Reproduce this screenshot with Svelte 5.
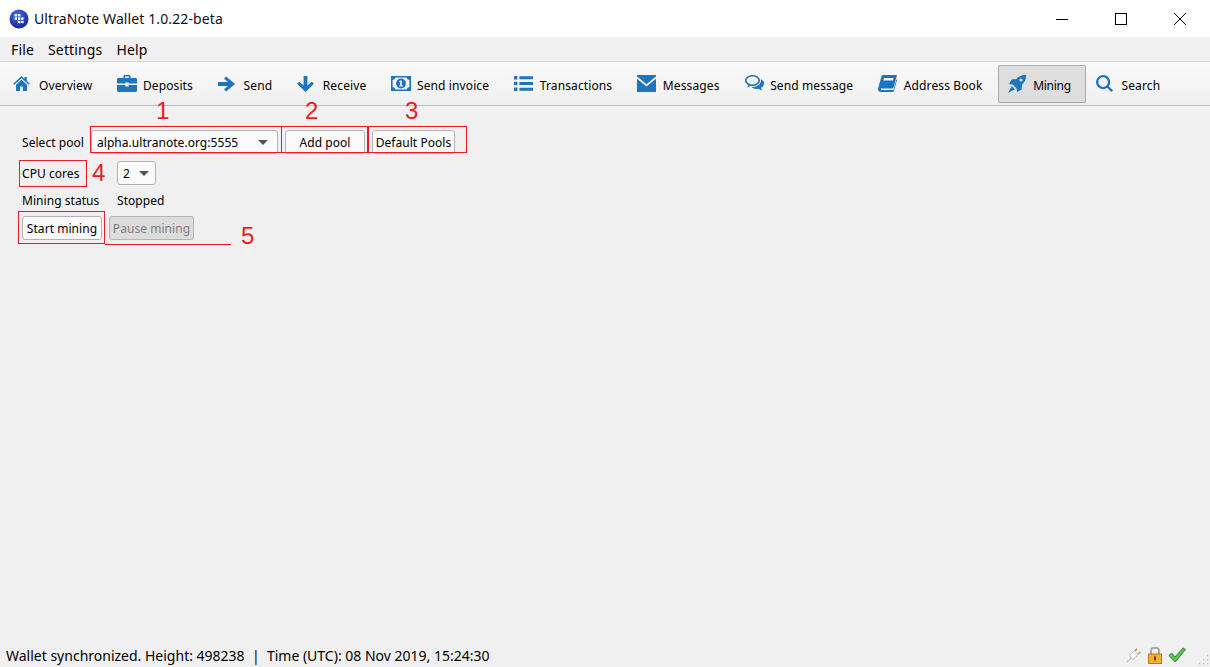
<script>
	const menus = ['File', 'Settings', 'Help'];

	const tools = [
		{ label: 'Overview', w: 17, h: 15, vb: '0 0 20 18', d: 'M10 0 13.6 3.3V1.2H16.4V5.9L20 9.2 18.8 10.6 10 2.7 1.2 10.6 0 9.2ZM3.4 10.4 10 4.4 16.6 10.4V18H11.8V12.6H8.2V18H3.4Z' },
		{ label: 'Deposits', w: 20, h: 17, vb: '0 0 20 17', d: 'M6.5 3V1.2Q6.5 0 7.7 0H12.3Q13.5 0 13.5 1.2V3H18.6Q20 3 20 4.4V8.6H11.6V7.6H8.4V8.6H0V4.4Q0 3 1.4 3ZM8 3H12V1.6H8ZM0 10H8.4V11.4H11.6V10H20V15.6Q20 17 18.6 17H1.4Q0 17 0 15.6Z' },
		{ label: 'Send', w: 17, h: 16, vb: '0 0 18 16', d: 'M8.6 0 18 8 8.6 16 6.4 13.6 10.6 10H0V6H10.6L6.4 2.4Z' },
		{ label: 'Receive', w: 17, h: 16, vb: '0 0 18 17', d: 'M7 0H11V10.2L15.6 6 18 8.3 9 17 0 8.3 2.4 6 7 10.2Z' },
		{ label: 'Send invoice', w: 20, h: 15, vb: '0 0 20 15', d: 'M0 0H20V15H0ZM1.6 4V11A3 3 0 0 1 4.4 13.4H15.6A3 3 0 0 1 18.4 11V4A3 3 0 0 1 15.6 1.6H4.4A3 3 0 0 1 1.6 4ZM10 2.6A4.9 4.9 0 1 1 10 12.4 4.9 4.9 0 1 1 10 2.6ZM8.2 5V6.2H9.2V9.4H8.2V10.6H11.8V9.4H10.8V4.6H9.6Z' },
		{ label: 'Transactions', w: 19, h: 15, vb: '0 0 19 15', d: 'M0 0H3.4V3.4H0ZM5.4 .2H19V3.2H5.4ZM0 5.8H3.4V9.2H0ZM5.4 6H19V9H5.4ZM0 11.6H3.4V15H0ZM5.4 11.8H19V14.8H5.4Z' },
		{ label: 'Messages', w: 19, h: 17, vb: '0 0 19 17', d: 'M0 0H19V1.6L9.5 9.2 0 1.6ZM0 3.8 9.5 11.4 19 3.8V17H0Z' },
		{ label: 'Send message', w: 19, h: 17, vb: '0 0 19 17', d: 'M7.5 0C11.6 0 15 2.4 15 5.5S11.6 11 7.5 11C6.8 11 6.2 10.9 5.6 10.8 4.6 11.6 3.4 12.2 2 12.4 2.6 11.6 3 10.8 3.2 9.9 1.2 8.9 0 7.3 0 5.5 0 2.4 3.4 0 7.5 0ZM7.5 1.6C4.3 1.6 1.7 3.3 1.7 5.5 1.7 7 3 8.3 4.9 9 5.7 9.3 6.6 9.4 7.5 9.4 10.7 9.4 13.3 7.7 13.3 5.5S10.7 1.6 7.5 1.6ZM16 4.2C17.8 5.2 19 6.7 19 8.5 19 10.3 17.8 11.9 16 12.7 16.2 13.7 16.6 14.6 17.2 15.4 15.8 15.2 14.6 14.6 13.6 13.8 13 13.9 12.4 14 11.8 14 9.6 14 7.7 13.2 6.5 12 11.4 12.4 16.6 9.4 16 4.2Z' },
		{ label: 'Address Book', w: 19, h: 17, vb: '0 0 19 17', d: 'M5 0H19L15.6 12.4Q15.2 13.4 14 13.4H3.6Q2.6 13.4 2.8 14.4 3 15 4 15H15.4L18.4 4.2 19 5 15.8 16Q15.5 17 14.4 17H3Q.4 17 0 14.4 0 13.6.3 12.8L3.4 1.4Q3.8 0 5 0ZM6 3 5.4 5.4H15L15.6 3Z' },
		{ label: 'Mining', active: true, w: 18, h: 18, vb: '0 0 18 18', d: 'M18 0C18.2 3.8 17 7 14 9.8L13.6 14.4 9 17 8.6 13.4 4.8 9.6 1 9.2 3.6 4.4 8.2 4C11 1.2 14.2-.2 18 0ZM13 3.4A1.6 1.6 0 1 0 13 6.6 1.6 1.6 0 1 0 13 3.4ZM3.8 11.2 6.8 14.2 4.6 15.6 0 18 2.4 13.4Z' },
		{ label: 'Search', w: 17, h: 17, vb: '0 0 18 18', d: 'M7.5 0A7.5 7.5 0 0 1 13.5 12L18 16.2 16.2 18 11.9 13.6A7.5 7.5 0 1 1 7.5 0ZM7.5 2.4A5.1 5.1 0 1 0 7.5 12.6 5.1 5.1 0 1 0 7.5 2.4Z' }
	];

	// logo dots, as [column, row]
	const dots = [[0, 0], [1, 0], [0, 1], [1, 1], [2, 1], [1, 2], [2, 2]];

	// hand-drawn review marks that sit on top of the screenshot
	const boxes = [
		{ x: 90, y: 126, w: 192, h: 27 },
		{ x: 281, y: 126, w: 87, h: 27 },
		{ x: 368, y: 126, w: 99, h: 27 },
		{ x: 19, y: 160, w: 68, h: 27 },
		{ x: 18, y: 211, w: 87, h: 33 },
		{ x: 105, y: 244, w: 126, h: 1 }
	];

	const marks = [
		{ n: 1, x: 156, y: 97 },
		{ n: 2, x: 305, y: 97 },
		{ n: 3, x: 405, y: 97 },
		{ n: 4, x: 92, y: 159 },
		{ n: 5, x: 241, y: 222 }
	];
</script>

<div class="window">
	<header class="titlebar">
		<svg class="logo" width="20" height="20" viewBox="0 0 20 20">
			<defs>
				<radialGradient id="orb" cx="40%" cy="30%" r="75%">
					<stop offset="0" stop-color="#4a6fe0" />
					<stop offset="1" stop-color="#14209a" />
				</radialGradient>
			</defs>
			<circle cx="10" cy="10" r="9.5" fill="url(#orb)" />
			{#each dots as [c, r]}
				<rect x={5.6 + c * 3.3} y={5 + r * 3.4} width="2.4" height="2.4" fill="#fff" />
			{/each}
		</svg>
		<span class="title">UltraNote Wallet 1.0.22-beta</span>
		<div class="winctl">
			<svg width="12" height="12" viewBox="0 0 12 12"><path d="M0 6.5H12" stroke="#000" fill="none" /></svg>
			<svg width="12" height="12" viewBox="0 0 12 12"><rect x=".5" y=".5" width="11" height="11" stroke="#000" fill="none" /></svg>
			<svg width="12" height="12" viewBox="0 0 12 12"><path d="M0 0 12 12M12 0 0 12" stroke="#000" fill="none" /></svg>
		</div>
	</header>

	<nav class="menubar">
		{#each menus as m}
			<span>{m}</span>
		{/each}
	</nav>

	<div class="toolbar">
		{#each tools as t}
			<div class="tool" class:active={t.active}>
				<span class="tool-icon">
					<svg width={t.w} height={t.h} viewBox={t.vb}><path fill="#1f74bf" fill-rule="evenodd" d={t.d} /></svg>
				</span>
				<span class="tool-label">{t.label}</span>
			</div>
		{/each}
	</div>

	<main class="content">
		<div class="row">
			<span class="label first">Select pool</span>
			<div class="btn combo pool">alpha.ultranote.org:5555<i class="caret"></i></div>
			<div class="btn add">Add pool</div>
			<div class="btn defaults">Default Pools</div>
		</div>
		<div class="row">
			<span class="label second">CPU cores</span>
			<div class="btn combo cores">2<i class="caret"></i></div>
		</div>
		<div class="row status-row">
			<span class="label second">Mining status</span>
			<span class="label">Stopped</span>
		</div>
		<div class="row">
			<div class="btn start">Start mining</div>
			<div class="btn pause">Pause mining</div>
		</div>
	</main>

	<footer class="statusbar">
		<span class="status-text">Wallet synchronized. Height: 498238&nbsp; |&nbsp; Time (UTC): 08 Nov 2019, 15:24:30</span>
		<div class="status-icons">
			<svg width="16" height="16" viewBox="0 0 16 16">
				<path d="M1 15 5 11" stroke="#c9c9c9" stroke-width="1.5" />
				<path d="M3.5 8 8.5 4 12 7.5 7.5 12.5Q5 12.5 3.5 8Z" fill="#f6f6f6" stroke="#bdbdbd" />
				<path d="M9 4 11 1.5M12 7 14.5 5" stroke="#b59a52" stroke-width="1.5" />
			</svg>
			<svg width="16" height="18" viewBox="0 0 16 18">
				<path d="M4 8V4.5C4 .8 12 .8 12 4.5V8" fill="none" stroke="#a8a8a8" stroke-width="2" />
				<rect x="1.5" y="8" width="13" height="9.5" fill="#f3b12b" stroke="#b97f17" />
				<rect x="7" y="10.5" width="2" height="4" fill="#6b3d05" />
			</svg>
			<svg width="18" height="16" viewBox="0 0 18 16">
				<path d="M1 8.5 3.8 6 7 10 15 1 17.5 2.5 7.2 15Z" fill="#5fc04a" stroke="#2f8a3a" />
			</svg>
		</div>
		<svg class="grip" width="10" height="10" viewBox="0 0 10 10" fill="#c4c4c4">
			<rect x="8" y="0" width="1.4" height="1.4" />
			<rect x="4" y="4" width="1.4" height="1.4" /><rect x="8" y="4" width="1.4" height="1.4" />
			<rect x="0" y="8" width="1.4" height="1.4" /><rect x="4" y="8" width="1.4" height="1.4" /><rect x="8" y="8" width="1.4" height="1.4" />
		</svg>
	</footer>

	{#each boxes as b}
		<div class="redbox" class:line={b.h === 1} style="left:{b.x}px;top:{b.y}px;width:{b.w}px;height:{b.h}px"></div>
	{/each}
	{#each marks as m}
		<span class="mark" style="left:{m.x}px;top:{m.y}px">{m.n}</span>
	{/each}
</div>

<style>
	:global(body) {
		margin: 0;
		background: #f0f0f0;
	}

	.window {
		position: relative;
		display: flex;
		flex-direction: column;
		height: 667px;
		overflow: hidden;
		background: #f0f0f0;
		color: #000;
		font-family: "Noto Sans", sans-serif;
	}

	.titlebar {
		display: flex;
		align-items: center;
		height: 37px;
		flex: none;
		background: #fff;
		padding-left: 9px;
	}

	.logo {
		margin-right: 5px;
	}

	.title {
		font-size: 14px;
		letter-spacing: .11px;
		color: #111;
	}

	.winctl {
		margin-left: auto;
		display: flex;
		gap: 47px;
		padding-right: 24px;
	}

	.menubar {
		display: flex;
		align-items: center;
		gap: 14px;
		height: 24px;
		flex: none;
		padding-left: 11px;
		font-size: 14px;
		letter-spacing: .15px;
		border-bottom: 1px solid #d9d9d9;
	}

	.toolbar {
		display: flex;
		align-items: center;
		height: 43px;
		flex: none;
		padding-left: 3.4px;
		background: linear-gradient(#f9f9f9, #f0f0f0);
		border-bottom: 1px solid #bdbdbd;
		font-size: 12px;
		letter-spacing: .12px;
	}

	.tool {
		display: flex;
		align-items: center;
		gap: 5.6px;
		height: 38px;
		padding: 0 14px 0 9px;
		border: 1px solid transparent;
		border-radius: 2px;
		box-sizing: border-box;
		white-space: nowrap;
	}

	.tool-label {
		position: relative;
		top: 2px;
	}

	.tool.active {
		background: #dedede;
		border-color: #a9a9a9;
		letter-spacing: -.25px;
	}

	.tool-icon {
		display: flex;
		width: 20px;
	}

	.content {
		flex: 1;
		padding: 24px 0 0 22px;
		font-size: 12px;
		letter-spacing: .05px;
	}

	.row {
		display: flex;
		align-items: center;
		gap: 7px;
		min-height: 24px;
		margin-bottom: 7px;
		white-space: nowrap;
	}

	.status-row {
		min-height: 16px;
	}

	.label.first {
		width: 62px;
	}

	.label.second {
		width: 88px;
	}

	.btn {
		display: flex;
		align-items: center;
		justify-content: center;
		height: 24px;
		flex: none;
		box-sizing: border-box;
		background: #fafafa;
		border: 1px solid #b4b4b4;
		border-radius: 3px;
	}

	.combo {
		justify-content: flex-start;
		padding-left: 5px;
	}

	.pool {
		width: 187px;
	}

	.add {
		width: 80px;
	}

	.defaults {
		width: 83px;
	}

	.cores {
		width: 39px;
	}

	.start {
		width: 80px;
	}

	.pause {
		width: 85px;
		background: #dcdcdc;
		color: #808080;
	}

	.caret {
		margin-left: auto;
		margin-right: 9px;
		width: 0;
		height: 0;
		border-left: 5px solid transparent;
		border-right: 5px solid transparent;
		border-top: 5px solid #555;
	}

	.cores .caret {
		margin-right: 6px;
	}

	.statusbar {
		display: flex;
		align-items: center;
		height: 24px;
		flex: none;
		padding-left: 6px;
		font-size: 14px;
	}

	.status-icons {
		margin-left: auto;
		margin-right: 24px;
		display: flex;
		align-items: center;
		gap: 5px;
	}

	.grip {
		position: absolute;
		right: 1px;
		bottom: 2px;
	}

	.redbox {
		position: absolute;
		box-sizing: border-box;
		border: 1px solid #ed1c24;
	}

	.redbox.line {
		border-width: 1px 0 0;
	}

	.mark {
		position: absolute;
		font-family: "Liberation Sans", sans-serif;
		font-size: 24px;
		line-height: 28px;
		color: #ed1c24;
	}
</style>
